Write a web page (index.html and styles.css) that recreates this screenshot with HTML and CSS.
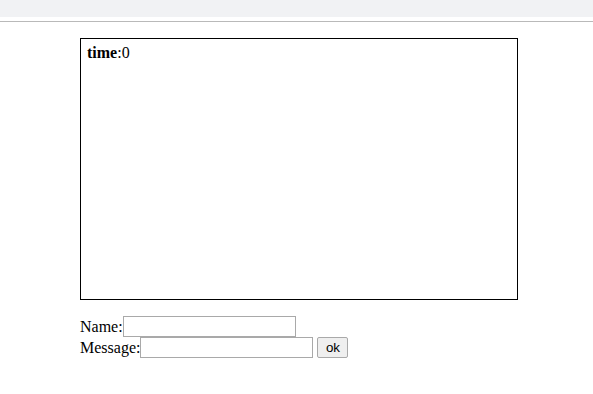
FILE: index.html
```html
<!DOCTYPE html>
<html lang="en">
<head>
    <meta charset="UTF-8">
    <meta name="viewport" content="width=device-width, initial-scale=1.0">
    <title>Chat</title>
    <link rel="stylesheet" href="styles.css">
</head>
<body>
    <div class="topbar"></div>
    <div class="rule"></div>

    <div class="page">
        <div class="board">
            <div class="status"><b>time</b>:0</div>
        </div>

        <form class="chat-form">
            <div class="row">
                <label for="name">Name:</label><input type="text" id="name">
            </div>
            <div class="row">
                <label for="msg">Message:</label><input type="text" id="msg"><button type="button" class="ok">ok</button>
            </div>
        </form>
    </div>
</body>
</html>
```

FILE: styles.css
```css
body {
    margin: 0;
    font-family: "Liberation Serif", "Times New Roman", serif;
    font-size: 16px;
    color: #000;
    background: #fff;
}

.topbar {
    height: 17px;
    background-color: #f1f2f4;
}

.rule {
    margin-top: 4px;
    height: 1px;
    background-color: #b9b9b9;
}

.page {
    padding: 16px 0 0 80px;
}

.board {
    width: 436px;
    height: 260px;
    border: 1px solid #000;
    box-sizing: content-box;
    padding: 0;
}

.status {
    padding: 5px 0 0 6px;
    line-height: 18px;
}

.chat-form {
    margin-top: 16px;
}

.row {
    display: flex;
    align-items: center;
    height: 21px;
}

.row label {
    line-height: 21px;
}

.row input[type="text"] {
    width: 173px;
    height: 21px;
    box-sizing: border-box;
    margin: 0;
    padding: 1px 2px;
    border: 1px solid #a9a9a9;
    font-family: Arial, "Liberation Sans", sans-serif;
    font-size: 13px;
}

.ok {
    margin-left: 4px;
    width: 31px;
    height: 21px;
    box-sizing: border-box;
    padding: 0;
    border: 1px solid #a9a9a9;
    border-radius: 2px;
    background: #efefef;
    font-family: "Liberation Sans", Arial, sans-serif;
    font-size: 13.33px;
    color: #000;
}
```
